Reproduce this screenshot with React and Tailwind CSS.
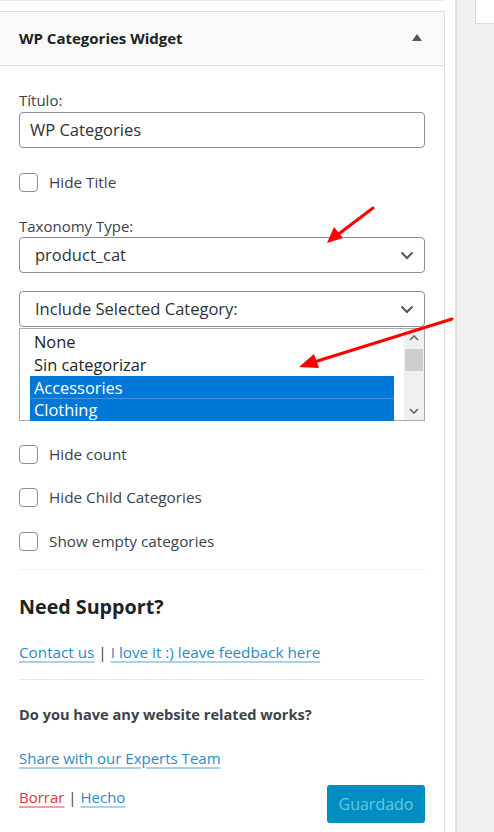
import React from "react";

const font = { fontFamily: '"Open Sans", "Noto Sans", "Liberation Sans", sans-serif' };

function Chevron() {
  return (
    <svg width="14" height="9" viewBox="0 0 14 9" className="shrink-0">
      <polyline points="1.5,1.5 7,7 12.5,1.5" fill="none" stroke="#50575e" strokeWidth="2" />
    </svg>
  );
}

function Check({ label, className = "" }) {
  return (
    <div className={`flex h-5 items-center ${className}`}>
      <span className="box-border h-[19px] w-[19px] shrink-0 rounded-[4px] border border-[#8c8f94] bg-white" />
      <span className="ml-[11px] text-[15.3px] leading-5 text-[#3c434a]">{label}</span>
    </div>
  );
}

export default function App() {
  return (
    <div className="relative flex h-[832px] w-[494px] overflow-hidden bg-white" style={font}>
      {/* left column */}
      <div className="flex w-[445px] shrink-0 flex-col">
        <div className="h-[11px] border-t border-[#ececec] mr-[1px]" />
        <div className="flex flex-1 flex-col border-r border-t border-[#dcdcde]">
          {/* header */}
          <div className="flex h-[54px] items-center justify-between border-b border-[#dcdcde] bg-[#f9f9f9] pl-[19px] pr-[22px]">
            <span className="text-[15px] font-bold text-[#1d2327]">WP Categories Widget</span>
            <svg width="10" height="7" viewBox="0 0 10 7" className="mb-[3px]">
              <polygon points="5,0 10,7 0,7" fill="#50575e" />
            </svg>
          </div>
          {/* body */}
          <div className="flex flex-col pl-[19px] pr-[19px] pt-[24px]">
            <div className="h-5 text-[15px] leading-5 text-[#3c434a]">Título:</div>
            <div className="mt-[2px] flex h-9 items-center rounded-[4px] border border-[#8c8f94] px-[10px] text-[16.5px] text-[#2c3338]">
              WP Categories
            </div>
            <Check label="Hide Title" className="mt-[24px]" />
            <div className="mt-[24px] h-5 text-[15px] leading-5 text-[#3c434a]">Taxonomy Type:</div>
            <div className="mt-[1px] flex h-9 items-center justify-between rounded-[4px] border border-[#8c8f94] pl-[15px] pr-[10px] text-[16.5px] text-[#2c3338]">
              <span>product_cat</span>
              <Chevron />
            </div>
            <div className="mt-[18px] flex h-9 items-center justify-between rounded-[4px] border border-[#8c8f94] pl-[15px] pr-[10px] text-[16.5px] text-[#2c3338]">
              <span>Include Selected Category:</span>
              <Chevron />
            </div>
            {/* listbox */}
            <div className="mt-[1px] flex h-[93px] border border-[#a7aaad] bg-white">
              <div className="flex flex-1 flex-col pl-[10px] pr-[10px] pt-[2px] text-[16.4px] text-[#1d2327]">
                <div className="h-[22px] pl-[4px] leading-[22px]">None</div>
                <div className="h-[23px] pl-[4px] leading-[23px]">Sin categorizar</div>
                <div className="h-[23px] border-b border-[#3d95e0] bg-[#0078d7] pl-[4px] leading-[23px] text-white">Accessories</div>
                <div className="h-[22px] bg-[#0078d7] pl-[4px] leading-[22px] text-white">Clothing</div>
              </div>
              <div className="flex w-[20px] flex-col items-center bg-[#f0f0f0]">
                <div className="flex h-[18px] items-center justify-center">
                  <svg width="10" height="6" viewBox="0 0 10 6"><polyline points="1,5 5,1 9,5" fill="none" stroke="#606060" strokeWidth="1.5" /></svg>
                </div>
                <div className="mt-[2px] h-[22px] w-[18px] bg-[#cdcdcd]" />
                <div className="flex-1" />
                <div className="flex h-[18px] items-center justify-center">
                  <svg width="10" height="6" viewBox="0 0 10 6"><polyline points="1,1 5,5 9,1" fill="none" stroke="#606060" strokeWidth="1.5" /></svg>
                </div>
              </div>
            </div>
            <Check label="Hide count" className="mt-[23px]" />
            <Check label="Hide Child Categories" className="mt-[23px]" />
            <Check label="Show empty categories" className="mt-[24px]" />
            <div className="mt-[18px] h-px bg-[#f0f0f1]" />
            <div className="mt-[25px] h-6 text-[19.7px] font-bold leading-6 text-[#1d2327]">Need Support?</div>
            <div className="mt-[22px] h-[22px] text-[15.25px] leading-[22px]">
              <span className="text-[#2a8bc5] underline decoration-[#a9d1ea] decoration-2 underline-offset-[3px]">Contact us</span>
              <span className="text-[#3c434a]"> | </span>
              <span className="text-[#2a8bc5] underline decoration-[#a9d1ea] decoration-2 underline-offset-[3px]">I love it :) leave feedback here</span>
            </div>
            <div className="mt-[16px] h-px bg-[#e8e8e8]" />
            <div className="mt-[24px] h-5 text-[14.6px] font-bold leading-5 text-[#3c434a]">Do you have any website related works?</div>
            <div className="mt-[23px] h-[22px] text-[15px] leading-[22px]">
              <span className="text-[#2a8bc5] underline decoration-[#a9d1ea] decoration-2 underline-offset-[3px]">Share with our Experts Team</span>
            </div>
            <div className="mt-[16px] flex items-start justify-between">
              <div className="h-6 text-[15px] leading-6">
                <span className="text-[#d63638] underline decoration-[#f0a0a0] decoration-2 underline-offset-[3px]">Borrar</span>
                <span className="text-[#3c434a]"> | </span>
                <span className="text-[#2a8bc5] underline decoration-[#a9d1ea] decoration-2 underline-offset-[3px]">Hecho</span>
              </div>
              <div className="flex h-[38px] w-[98px] items-center justify-center rounded-[3px] bg-[#008ec2] text-[16px] text-[#66c6e4]">
                Guardado
              </div>
            </div>
          </div>
        </div>
      </div>
      {/* right column */}
      <div className="flex flex-1 bg-white pl-[10px]">
        <div className="flex flex-1 flex-col items-end border-l-2 border-[#e2e2e2] bg-[#f0f0f1]">
          <div className="h-[24px] w-[19px] border-b border-l border-[#dcdcde] bg-white" />
        </div>
      </div>
      {/* annotation arrows */}
      <svg className="pointer-events-none absolute left-0 top-0" width="494" height="832">
        <line x1="373" y1="208" x2="336" y2="236" stroke="#ff0000" strokeWidth="3" strokeLinecap="round" />
        <polygon points="327,243 334,227 343,238" fill="#ff0000" />
        <line x1="452" y1="319" x2="311" y2="363" stroke="#ff0000" strokeWidth="3" strokeLinecap="round" />
        <polygon points="299,367 314,354 319,368" fill="#ff0000" />
      </svg>
    </div>
  );
}
